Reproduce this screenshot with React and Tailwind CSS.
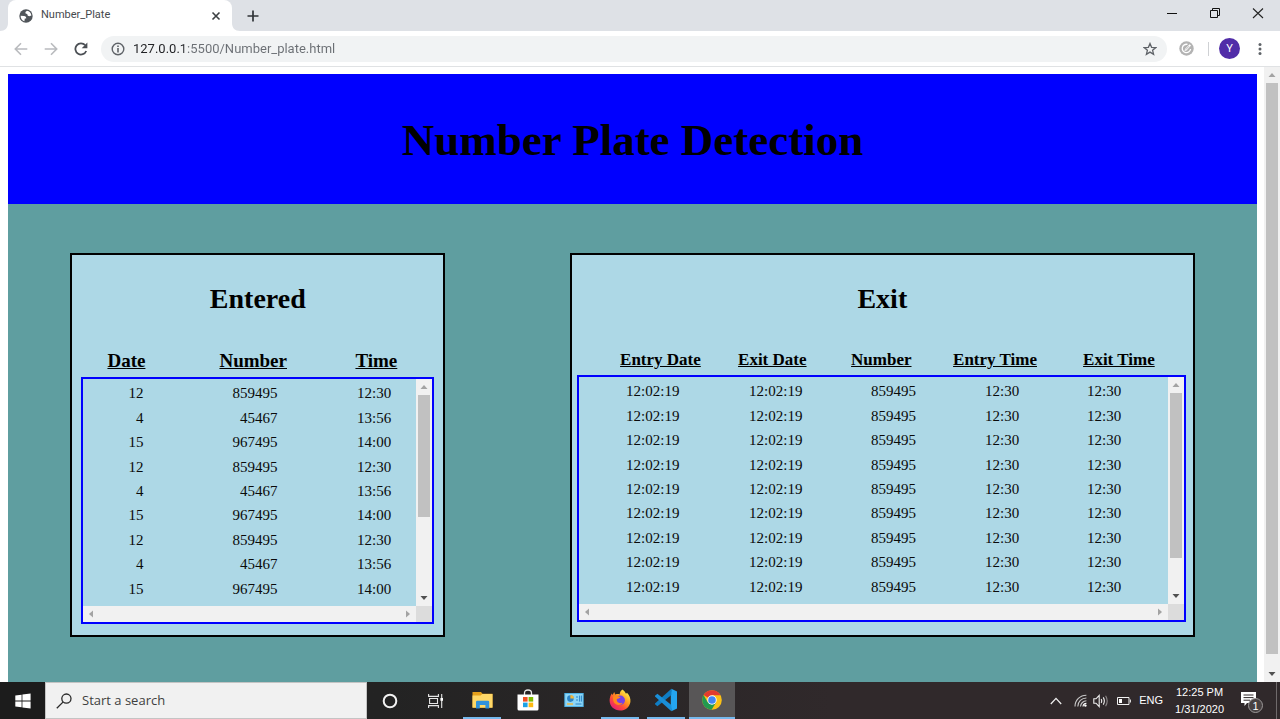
import React from "react";

const entered = [
  ["12", "859495", "12:30"],
  ["4", "45467", "13:56"],
  ["15", "967495", "14:00"],
  ["12", "859495", "12:30"],
  ["4", "45467", "13:56"],
  ["15", "967495", "14:00"],
  ["12", "859495", "12:30"],
  ["4", "45467", "13:56"],
  ["15", "967495", "14:00"],
];

const exited = Array.from({ length: 9 }, () => ["12:02:19", "12:02:19", "859495", "12:30", "12:30"]);

const arrowRotation = { up: "", down: "rotate-180", left: "-rotate-90", right: "rotate-90" };

function Arrow({ dir, tone = "text-[#a3a3a3]" }) {
  return (
    <span className={`flex size-4 shrink-0 items-center justify-center ${tone}`}>
      <svg viewBox="0 0 8 8" className={`size-2 ${arrowRotation[dir]}`} fill="currentColor">
        <path d="M4 2 L7.5 6 H0.5 Z" />
      </svg>
    </span>
  );
}

function VerticalBar({ thumb }) {
  return (
    <div className="flex w-4 shrink-0 flex-col bg-[#f1f1f1]">
      <Arrow dir="up" />
      <div className="flex-1 px-0.5">
        <div className={`bg-[#c1c1c1] ${thumb}`} />
      </div>
      <Arrow dir="down" tone="text-[#505050]" />
    </div>
  );
}

function ScrollBox({ children, thumb }) {
  return (
    <div className="flex h-[247px] flex-col border-2 border-[#0000ff]">
      <div className="flex min-h-0 flex-1">
        <div className="min-w-0 flex-1 overflow-hidden pt-0.5">{children}</div>
        <VerticalBar thumb={thumb} />
      </div>
      <div className="flex h-4 shrink-0">
        <div className="flex flex-1 justify-between bg-[#f1f1f1]">
          <Arrow dir="left" />
          <Arrow dir="right" />
        </div>
        <div className="w-4 bg-[#dcdcdc]" />
      </div>
    </div>
  );
}

function HeadTable({ cols, labels, className }) {
  return (
    <table className={`w-full table-fixed text-left underline ${className}`}>
      <thead>
        <tr>
          {labels.map((label, i) => (
            <th key={label} scope="col" className={`p-0 font-bold whitespace-nowrap ${cols[i]}`}>
              {label}
            </th>
          ))}
        </tr>
      </thead>
    </table>
  );
}

function DataTable({ cols, rows, label, className }) {
  return (
    <table aria-label={label} className={`h-[220px] w-full table-fixed text-[15px] leading-5 text-[#0a0a0a] ${className}`}>
      <tbody>
        {rows.map((row, r) => (
          <tr key={r}>
            {row.map((cell, i) => (
              <td key={i} className={`p-0 align-middle ${cols[i]}`}>
                {cell}
              </td>
            ))}
          </tr>
        ))}
      </tbody>
    </table>
  );
}

function GlobeIcon() {
  return (
    <svg viewBox="0 0 14 14" className="size-3.5 shrink-0">
      <circle cx="7" cy="7" r="6.7" fill="#50555a" />
      <path d="M1.6 6.8 L5 7 C6.6 7 7.4 8 7.2 9.4 H5.8 L5.4 12.2 C3 11.5 1.6 9.5 1.6 6.8 Z" fill="#fff" />
      <path d="M8 1.8 L6.4 3 L6.6 4.6 L8.2 5 L8.8 6.8 L10.4 7.2 L12.4 6.4 C12.1 4 10.4 2.1 8 1.8 Z" fill="#fff" />
    </svg>
  );
}

function BrowserChrome() {
  return (
    <header className="shrink-0 font-['Roboto',sans-serif]">
      <div className="flex h-[31px] items-stretch bg-[#dee1e6]">
        <svg viewBox="0 0 8 8" className="size-2 self-end" fill="#fff">
          <path d="M8 0 V8 H0 C5 8 8 5 8 0 Z" />
        </svg>
        <div className="flex w-56 items-center rounded-t-lg bg-white pr-2.5 pl-[11px]">
          <GlobeIcon />
          <span className="ml-2 flex-1 text-[11px] text-[#45494d]">Number_Plate</span>
          <button aria-label="Close tab" className="flex size-3 items-center justify-center">
            <svg viewBox="0 0 10 10" className="size-2.5" stroke="#3c4043" strokeWidth="1.6">
              <path d="M1.5 1.5 L8.5 8.5 M8.5 1.5 L1.5 8.5" />
            </svg>
          </button>
        </div>
        <svg viewBox="0 0 8 8" className="size-2 self-end" fill="#fff">
          <path d="M0 0 V8 H8 C3 8 0 5 0 0 Z" />
        </svg>
        <button aria-label="New tab" className="ml-[5px] flex w-4 items-center justify-center">
          <svg viewBox="0 0 12 12" className="size-3" stroke="#303337" strokeWidth="1.7">
            <path d="M6 0.5 V11.5 M0.5 6 H11.5" />
          </svg>
        </button>
        <div className="ml-auto flex items-start gap-[31px] pt-[7px] pr-4">
          <button aria-label="Minimize" className="flex size-3 items-center justify-center">
            <svg viewBox="0 0 12 12" className="size-3" stroke="#111" fill="none">
              <path d="M1 6.5 H11" />
            </svg>
          </button>
          <button aria-label="Restore" className="flex size-3 items-center justify-center">
            <svg viewBox="0 0 12 12" className="size-3" stroke="#111" fill="none">
              <path d="M1.5 3.5 H8.5 V10.5 H1.5 Z M3.5 3 V1.5 H10.5 V8.5 H9" />
            </svg>
          </button>
          <button aria-label="Close" className="flex size-3 items-center justify-center">
            <svg viewBox="0 0 12 12" className="size-3" stroke="#222" fill="none" strokeWidth="1.1">
              <path d="M1 1.5 L11 11 M11 1.5 L1 11" />
            </svg>
          </button>
        </div>
      </div>
      <div className="flex h-9 items-center border-b border-[#e0e2e4] bg-white px-3.5">
        <button aria-label="Back" className="size-3.5">
          <svg viewBox="0 0 14 14" className="size-3.5" stroke="#b9bbbe" strokeWidth="1.6" fill="none">
            <path d="M13.3 7 H1.6 M7 1.3 L1.3 7 L7 12.7" />
          </svg>
        </button>
        <button aria-label="Forward" className="ml-4 size-3.5">
          <svg viewBox="0 0 14 14" className="size-3.5" stroke="#b9bbbe" strokeWidth="1.6" fill="none">
            <path d="M0.7 7 H12.4 M7 1.3 L12.7 7 L7 12.7" />
          </svg>
        </button>
        <button aria-label="Reload" className="ml-4 size-3.5">
          <svg viewBox="0 0 14 14" className="size-3.5">
            <path d="M12.2 9 A5.6 5.6 0 1 1 11.2 3.2" stroke="#4b4f54" strokeWidth="1.8" fill="none" />
            <path d="M13.4 0.5 V6.2 H7.7 Z" fill="#4b4f54" />
          </svg>
        </button>
        <div className="ml-[13px] flex h-[26px] flex-1 items-center rounded-full bg-[#f1f3f4] pr-2.5 pl-2.5">
          <svg viewBox="0 0 14 14" className="size-3.5 shrink-0">
            <circle cx="7" cy="7" r="5.8" fill="none" stroke="#5f6368" strokeWidth="1.4" />
            <path d="M6.2 3.4 H7.8 V5 H6.2 Z M6.2 6.1 H7.8 V10.5 H6.2 Z" fill="#5f6368" />
          </svg>
          <input
            aria-label="Address"
            defaultValue="127.0.0.1:5500/Number_plate.html"
            className="ml-2 min-w-0 flex-1 bg-[linear-gradient(90deg,#202124_51px,#6b6f74_51px)] bg-clip-text text-[13px] text-transparent outline-none"
          />
          <button aria-label="Bookmark this page" className="size-3.5">
            <svg viewBox="0 0 14 14" className="size-3.5" fill="none" stroke="#5f6368" strokeWidth="1.3">
              <path d="M7 1.5 L8.6 5.3 L12.8 5.6 L9.6 8.3 L10.6 12.3 L7 10.1 L3.4 12.3 L4.4 8.3 L1.2 5.6 L5.4 5.3 Z" />
            </svg>
          </button>
        </div>
        <button aria-label="Extension" className="ml-3 size-[15px]">
          <svg viewBox="0 0 15 15" className="size-[15px]">
            <circle cx="7.5" cy="7.5" r="7.2" fill="#b3b3b3" />
            <path d="M8.5 3.4 A4.2 4.2 0 1 0 11.6 8" fill="none" stroke="#fff" strokeWidth="1.3" />
            <path d="M5.5 10 L6 8 L10.6 3.2 L12 4.5 L7.5 9.4 Z" fill="#fff" />
            <path d="M6.8 8.6 L10 5.2" stroke="#b3b3b3" strokeWidth="0.9" />
          </svg>
        </button>
        <div className="ml-3.5 h-3.5 w-px bg-[#cfd1d4]" />
        <button
          aria-label="Profile"
          className="ml-2.5 flex size-[21px] items-center justify-center rounded-full bg-[#512da8] text-[11px] leading-none text-white"
        >
          Y
        </button>
        <button aria-label="Menu" className="ml-3.5 flex h-4 w-3 items-center justify-center">
          <svg viewBox="0 0 4 14" className="h-3.5 w-1" fill="#5f6368">
            <circle cx="2" cy="2.4" r="1.5" />
            <circle cx="2" cy="7" r="1.5" />
            <circle cx="2" cy="11.6" r="1.5" />
          </svg>
        </button>
      </div>
    </header>
  );
}

function TaskButton({ label, running, active, children }) {
  return (
    <button aria-label={label} className={`flex w-[46px] flex-col items-center ${active ? "bg-[#585657]" : ""}`}>
      <span className="flex flex-1 items-center">{children}</span>
      <span className={`h-0.5 ${active ? "w-full" : "w-[38px]"} ${running ? "bg-[#76b9ed]" : ""}`} />
    </button>
  );
}

function Taskbar() {
  return (
    <footer className="flex h-[37px] shrink-0 items-stretch bg-linear-to-r from-[#232323] from-30% to-[#30292b] to-65% font-['Open_Sans',sans-serif] text-white">
      <button aria-label="Start" className="flex w-[45px] items-center justify-center bg-[#1c1c1c]">
        <svg viewBox="0 0 16 16" className="size-4" fill="#fff">
          <path d="M0.3 2.6 L6.6 1.7 V7.6 H0.3 Z M7.4 1.6 L15.6 0.4 V7.6 H7.4 Z M0.3 8.4 H6.6 V14.3 L0.3 13.4 Z M7.4 8.4 H15.6 V15.6 L7.4 14.4 Z" />
        </svg>
      </button>
      <div className="flex w-[322px] items-center border border-[#c4c4c4] bg-[#f1f1f1] pl-2.5">
        <svg viewBox="0 0 16 16" className="size-4 shrink-0" fill="none" stroke="#2b2b2b" strokeWidth="1.3">
          <circle cx="10.4" cy="5.6" r="4.6" />
          <path d="M7.2 8.9 L0.8 15.3" />
        </svg>
        <input
          aria-label="Start a search"
          placeholder="Start a search"
          className="ml-2.5 min-w-0 flex-1 bg-transparent text-[13px] outline-none placeholder:text-[#3f3f3f]"
        />
      </div>
      <button aria-label="Cortana" className="flex w-[46px] items-center justify-center">
        <svg viewBox="0 0 16 16" className="size-4" fill="none" stroke="#f2f2f2" strokeWidth="2">
          <circle cx="8" cy="8" r="6.3" />
        </svg>
      </button>
      <button aria-label="Task view" className="flex w-[46px] items-center justify-center">
        <svg viewBox="0 0 16 16" className="size-4" fill="none" stroke="#e6e6e6" strokeWidth="1.1">
          <path d="M0.6 1 V3.4 H10.4 V1 M0.6 15 V12.6 H10.4 V15 M1.6 5.5 H9.5 V10.5 H1.6 Z M13.7 1 V15" />
          <path d="M12.4 5 H15 V7.8 H12.4 Z" fill="#fff" stroke="none" />
        </svg>
      </button>
      <TaskButton label="File Explorer" running>
        <svg viewBox="0 0 21 18" className="h-[18px] w-[21px]">
          <path d="M0.5 1 H9 L10.5 2.8 H20.5 V16.5 H0.5 Z" fill="#e5a01b" />
          <path d="M0.5 4.5 H8.6 L10.2 3 H20.5 V16.8 H0.5 Z" fill="#ffd868" />
          <path d="M4 17.5 V11 Q4 9.8 5.2 9.8 H16 Q17.2 9.8 17.2 11 V17.5 H13.4 V14 H7.8 V17.5 Z" fill="#2f92dc" />
        </svg>
      </TaskButton>
      <TaskButton label="Microsoft Store">
        <svg viewBox="0 0 22 22" className="size-[22px]">
          <path d="M7.5 6 V4 Q7.5 1 11 1 Q14.5 1 14.5 4 V6" fill="none" stroke="#e8e8e8" strokeWidth="1.3" />
          <path d="M0.5 5.5 H21.5 V20 Q21.5 21.5 20 21.5 H2 Q0.5 21.5 0.5 20 Z" fill="#fff" />
          <path d="M6 8 H10.6 V12.6 H6 Z" fill="#f04e23" />
          <path d="M11.6 8 H16.2 V12.6 H11.6 Z" fill="#7fba00" />
          <path d="M6 13.6 H10.6 V18.2 H6 Z" fill="#1ba1e6" />
          <path d="M11.6 13.6 H16.2 V18.2 H11.6 Z" fill="#fdb913" />
        </svg>
      </TaskButton>
      <TaskButton label="Control Panel">
        <svg viewBox="0 0 20 16" className="h-4 w-5">
          <path d="M0.3 1 H19.7 V15 H0.3 Z" fill="#4fb2e6" />
          <path d="M1.3 2 H18.7 V14 H1.3 Z" fill="#8dd6f7" />
          <circle cx="6.4" cy="6.6" r="3.3" fill="#2b84c8" />
          <path d="M6.4 6.6 V3 A3.6 3.6 0 0 1 10 6.6 Z" fill="#f4b53a" />
          <path d="M12 5 H14 M12 8 H14 M15.6 3.6 V9.6 M17.4 3.6 V9.6 M11.5 12 H17.5" stroke="#2b84c8" strokeWidth="1" />
          <path d="M3 12 H9" stroke="#f4b53a" strokeWidth="1.4" />
        </svg>
      </TaskButton>
      <TaskButton label="Firefox" running>
        <svg viewBox="0 0 22 22" className="size-[22px]">
          <defs>
            <linearGradient id="fox" x1="0.85" y1="0.1" x2="0.2" y2="0.9">
              <stop offset="0" stopColor="#fff04a" />
              <stop offset="0.4" stopColor="#ff9a1f" />
              <stop offset="0.7" stopColor="#ff4a3a" />
              <stop offset="1" stopColor="#e6246e" />
            </linearGradient>
          </defs>
          <path d="M13.4 0.5 C15.2 1.8 16.4 3.2 17 4.8 L18 3.8 C20.5 6.5 21.8 9.6 21.4 13 C20.6 18 16.4 21.6 11.2 21.6 C5.2 21.6 0.6 17.4 0.6 11.6 C0.6 8.8 1.4 6.4 2.8 4.4 L3.6 6 L5.2 3 L6.2 5.6 C7.8 5 9.4 5 10.6 5.4 C10.8 3.4 11.8 1.6 13.4 0.5 Z" fill="url(#fox)" />
          <circle cx="11.4" cy="11.2" r="4.6" fill="#7542e5" />
          <path d="M4.6 6.6 C7.4 6.4 9 7 11.6 8.2 C10 9.4 9.2 9.6 7.8 10 C7.4 13 9.8 15 13.6 13.8 C11.8 16.6 7.4 17 5 13.6 C3.8 11.4 3.8 8.8 4.6 6.6 Z" fill="#ff8a1c" />
        </svg>
      </TaskButton>
      <TaskButton label="Visual Studio Code" running>
        <svg viewBox="0 0 24 24" className="size-6">
          <path d="M17.4 0.8 L23 3.4 V20.6 L17.4 23.2 L16.8 17.4 V6.6 Z" fill="#24a5f0" />
          <path d="M17.4 0.8 V7 L3.4 18.2 L1 16.2 V15.6 Z" fill="#0f7dc4" />
          <path d="M17.4 23.2 V17 L3.4 5.8 L1 7.8 V8.4 Z" fill="#1a8fd8" />
        </svg>
      </TaskButton>
      <TaskButton label="Google Chrome" running active>
        <svg viewBox="0 0 20 20" className="size-5">
          <circle cx="10" cy="10" r="9.8" fill="#fbc116" />
          <path d="M10 10 L1.5 5.1 A9.8 9.8 0 0 1 18.5 5.3 L10 5.3 Z" fill="#e33b2e" />
          <path d="M1.5 5.1 A9.8 9.8 0 0 0 9.6 19.8 L14 12.4 L10 10 L5.9 12.4 Z" fill="#229a4f" />
          <circle cx="10" cy="10" r="4.7" fill="#fff" />
          <circle cx="10" cy="10" r="3.8" fill="#4285f4" />
        </svg>
      </TaskButton>
      <div className="ml-auto flex items-center font-['Liberation_Sans',sans-serif]">
        <svg viewBox="0 0 12 8" className="h-2 w-3" fill="none" stroke="#eee" strokeWidth="1.3">
          <path d="M0.8 7 L6 1.4 L11.2 7" />
        </svg>
        <svg viewBox="0 0 13 13" className="ml-3 size-[13px]" fill="none" stroke="#c9c9c9" strokeWidth="1.1">
          <path d="M1 12.5 A11.3 11.3 0 0 1 12.4 1.2 M3.8 12.5 A8.6 8.6 0 0 1 12.4 4 M6.5 12.5 A6 6 0 0 1 12.4 6.8" />
          <path d="M9 12.5 A3.4 3.4 0 0 1 12.4 9.4" stroke="#fff" />
          <circle cx="11.4" cy="11.6" r="1.2" fill="#fff" stroke="none" />
        </svg>
        <svg viewBox="0 0 16 14" className="ml-1.5 h-3.5 w-4" fill="none" stroke="#f0f0f0" strokeWidth="1.1">
          <path d="M0.8 4.8 H3 L6.2 1.4 V12.6 L3 9.2 H0.8 Z M8.2 5 Q9.4 7 8.2 9 M10.3 3.4 Q12.4 7 10.3 10.6" />
          <path d="M12.6 1.8 Q15.8 7 12.6 12.2" stroke="#8c8788" />
        </svg>
        <svg viewBox="0 0 14 8" className="ml-2 h-2 w-3.5" fill="none" stroke="#f0f0f0">
          <path d="M0.5 0.5 H12 V7.5 H0.5 Z" />
          <path d="M13.4 2.5 V5.5" />
          <path d="M2 2 H5 V6 H2 Z" fill="#fff" stroke="none" />
        </svg>
        <span className="ml-2 text-[11px]">ENG</span>
        <div className="ml-3 flex flex-col text-center text-[11px] leading-[17px]">
          <span>12:25 PM</span>
          <span>1/31/2020</span>
        </div>
        <button aria-label="Notifications" className="ml-4 size-6">
          <svg viewBox="0 0 24 24" className="size-6">
            <path d="M1 3 H16 V14 H7 L4.5 17 V14 H1 Z" fill="#fff" />
            <path d="M3.5 6 H13.5 M3.5 8.6 H13.5 M3.5 11.2 H10" stroke="#30292b" />
            <circle cx="15.5" cy="16.5" r="7" fill="#474142" stroke="#9b9798" />
            <text x="15.5" y="20.5" textAnchor="middle" fontSize="11" fill="#fff">1</text>
          </svg>
        </button>
        <div className="ml-3 h-[37px] w-1 border-l border-[#6f6a6b]" />
      </div>
    </footer>
  );
}

export default function App() {
  return (
    <div className="flex h-screen flex-col overflow-hidden bg-white">
      <BrowserChrome />
      <div className="flex min-h-0 flex-1">
        <main className="flex min-w-0 flex-1 flex-col overflow-hidden pt-[7px] pr-[7px] pl-2 font-['Liberation_Serif',serif] text-black">
          <div className="flex h-[130px] shrink-0 items-center justify-center bg-[#0000ff] pt-0.5">
            <h1 className="text-[45px] leading-[52px] font-bold">Number Plate Detection</h1>
          </div>
          <div className="flex flex-1 items-start bg-[#5f9ea0] px-[5%] pt-[49px]">
            <div className="flex w-full items-stretch justify-between">
              <section className="w-1/3 border-2 border-black bg-[#add8e6] pt-7 pb-[11px]">
                <h2 className="text-center text-[28px] leading-8 font-bold">Entered</h2>
                <div className="mt-[35px] pl-[35px]">
                  <HeadTable
                    className="text-[19px] leading-[22px]"
                    labels={["Date", "Number", "Time"]}
                    cols={["w-[112px]", "w-[136px]", ""]}
                  />
                </div>
                <div className="mx-[9px] mt-[5px]">
                  <ScrollBox thumb="h-[122px]">
                    <div className="pr-[25px]">
                      <DataTable
                        label="Entered"
                        className="text-right"
                        rows={entered}
                        cols={["w-[60px]", "w-[134px]", ""]}
                      />
                    </div>
                  </ScrollBox>
                </div>
              </section>
              <section className="w-5/9 border-2 border-black bg-[#add8e6] pt-7">
                <h2 className="text-center text-[28px] leading-8 font-bold">Exit</h2>
                <div className="mt-[35px] pl-12">
                  <HeadTable
                    className="text-[17px] leading-[20px]"
                    labels={["Entry Date", "Exit Date", "Number", "Entry Time", "Exit Time"]}
                    cols={["w-[118px]", "w-[113px]", "w-[102px]", "w-[130px]", ""]}
                  />
                </div>
                <div className="mt-[5px] mr-[7px] ml-[5px]">
                  <ScrollBox thumb="h-[165px]">
                    <div className="pl-[47px]">
                      <DataTable
                        label="Exit"
                        className="text-left"
                        rows={exited}
                        cols={["w-[123px]", "w-[122px]", "w-[114px]", "w-[102px]", ""]}
                      />
                    </div>
                  </ScrollBox>
                </div>
              </section>
            </div>
          </div>
        </main>
        <VerticalBar thumb="h-[98%]" />
      </div>
      <Taskbar />
    </div>
  );
}
